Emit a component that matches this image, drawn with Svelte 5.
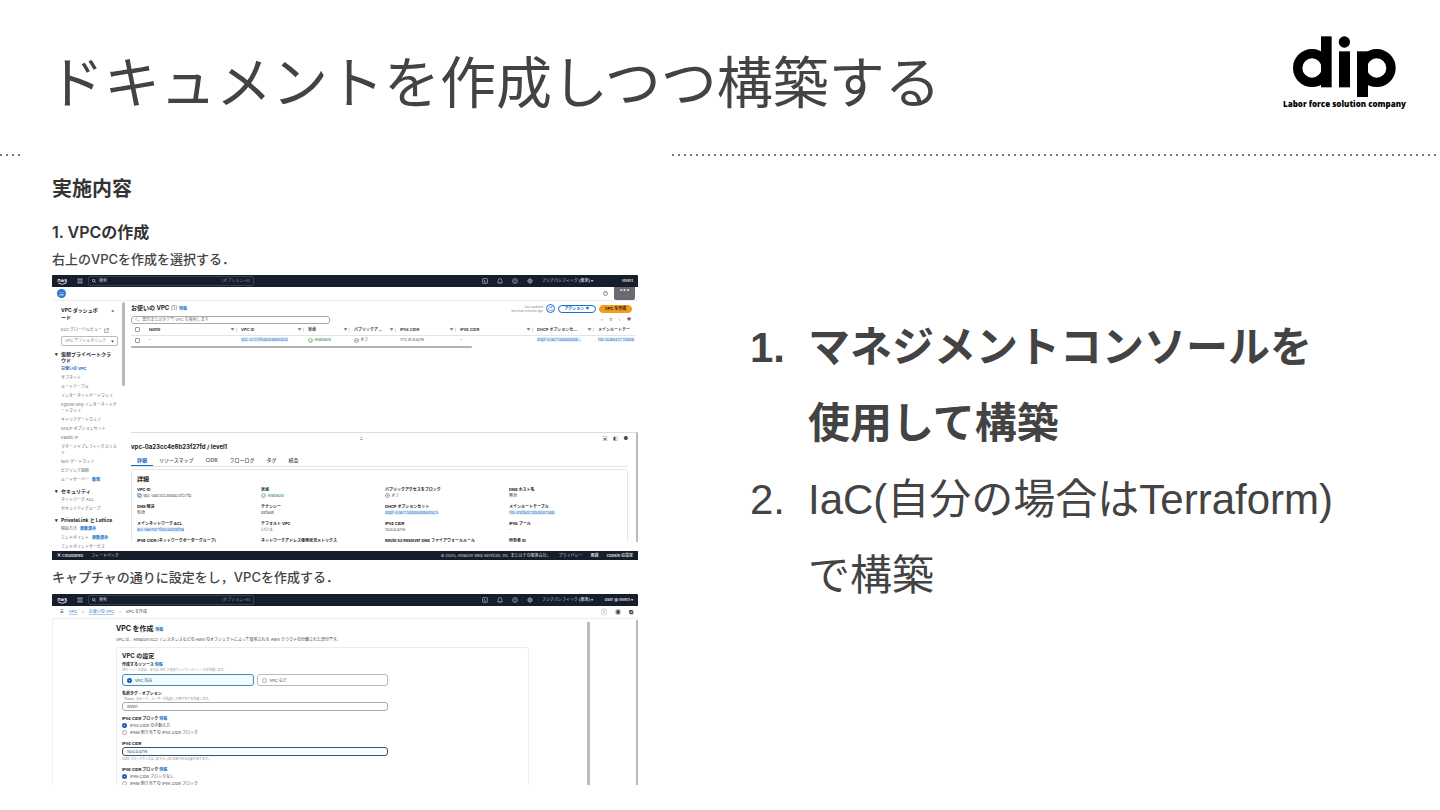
<script>
  const groups = [
    {
      title: '仮想プライベートクラウド',
      items: [
        { name: 'お使いの VPC', active: true },
        { name: 'サブネット' },
        { name: 'ルートテーブル' },
        { name: 'インターネットゲートウェイ' },
        { name: 'Egress-only インターネットゲートウェイ' },
        { name: 'キャリアゲートウェイ' },
        { name: 'DHCP オプションセット' },
        { name: 'Elastic IP' },
        { name: 'マネージドプレフィックスリスト' },
        { name: 'NAT ゲートウェイ' },
        { name: 'ピアリング接続' },
        { name: 'ルートサーバー', tag: '新規' }
      ]
    },
    { title: 'セキュリティ', items: [{ name: 'ネットワーク ACL' }, { name: 'セキュリティグループ' }] },
    {
      title: 'PrivateLink と Lattice',
      items: [
        { name: '開始方法', tag: '更新済み' },
        { name: 'エンドポイント', tag: '更新済み' },
        { name: 'エンドポイントサービス' }
      ]
    }
  ];
  const columns = ['Name', 'VPC ID', '状態', 'パブリックア...', 'IPv4 CIDR', 'IPv6 CIDR', 'DHCP オプションセ...', 'メインルートテー'];
  const tabs = ['詳細', 'リソースマップ', 'CIDR', 'フローログ', 'タグ', '統合'];
  const details = [
    { label: 'VPC ID', value: 'vpc-0a23cc4e8b23f27fd', icon: 'copy' },
    { label: '状態', value: 'Available', icon: 'ok' },
    { label: 'パブリックアクセスをブロック', value: 'オフ', icon: 'off' },
    { label: 'DNS ホスト名', value: '無効' },
    { label: 'DNS 解決', value: '有効' },
    { label: 'テナンシー', value: 'default' },
    { label: 'DHCP オプションセット', value: 'dopt-03a7138bea4db6d5c5', link: true },
    { label: 'メインルートテーブル', value: 'rtb-01dfa2c1d5d0875bb', link: true },
    { label: 'メインネットワーク ACL', value: 'acl-0a61971f86ca0d9fda', link: true },
    { label: 'デフォルト VPC', value: 'いいえ' },
    { label: 'IPv4 CIDR', value: '10.0.0.0/16' },
    { label: 'IPv6 プール', value: '-' },
    { label: 'IPv6 CIDR (ネットワークボーダーグループ)' },
    { label: 'ネットワークアドレス使用状況メトリクス' },
    { label: 'Route 53 Resolver DNS ファイアウォールルール' },
    { label: '所有者 ID' }
  ];
</script>

{#snippet topbar(user, id)}
  <header class="topbar">
    <svg class="aws" viewBox="0 0 20 14"><path d="M2 8V3h4v5M8 3l1 5 2-5 1 5 2-5M19 3h-3v2h3v3h-4M2 10q8 5 17 0" /></svg>
    <svg class="apps" viewBox="0 0 10 10"><path d="M1 1h2v2H1zM4 1h2v2H4zM7 1h2v2H7zM1 4h2v2H1zM4 4h2v2H4zM7 4h2v2H7zM1 7h2v2H1zM4 7h2v2H4zM7 7h2v2H7z" /></svg>
    <label class="find" for={id}>
      <svg viewBox="0 0 10 10"><circle cx="4" cy="4" r="3" /><path d="M6 6l3 3" /></svg>
      <input {id} type="search" placeholder="検索" aria-label="検索" />
      <span>[オプション+S]</span>
    </label>
    <div class="tools">
      <svg viewBox="0 0 10 10"><rect x="1" y="1" width="8" height="8" rx="1" /><path d="M3 3l2 2-2 2M5 7h2" /></svg>
      <svg viewBox="0 0 10 10"><path d="M1 8h8L8 6V4a3 3 0 0 0-6 0v2zM4 9h2" /></svg>
      <svg viewBox="0 0 10 10"><circle cx="5" cy="5" r="4" /><path d="M4 4q1-2 2 0L5 5v1M5 7v1" /></svg>
      <svg viewBox="0 0 10 10"><circle cx="5" cy="5" r="3" /><circle cx="5" cy="5" r="1" /><path d="M5 0v2M5 8v2M0 5h2M8 5h2M2 2l1 1M7 7l1 1M8 2L7 3M2 8l1-1" /></svg>
    </div>
    <span class="region">アジアパシフィック <b>(東京) ▾</b></span>
    <b class="user">{user}</b>
  </header>
{/snippet}

{#snippet stateIcon(kind)}
  <svg class="state {kind}" viewBox="0 0 10 10">
    {#if kind === 'copy'}
      <rect x="1" y="1" width="6" height="6" rx="1" /><rect x="3" y="3" width="6" height="6" rx="1" />
    {:else}
      <circle cx="5" cy="5" r="4" /><path d={kind === 'ok' ? 'M3 5l2 2 3-4' : 'M3 5h4'} />
    {/if}
  </svg>
{/snippet}

<div class="slide">
  <header class="head">
    <h1>ドキュメントを作成しつつ構築する</h1>
    <div class="logo">
      <svg viewBox="160 47 309 183" role="img" aria-label="dip">
        <g class="bowls"><circle cx="217" cy="143" r="43" /><circle cx="411" cy="143" r="43" /></g>
        <g class="stems">
          <rect x="244" y="48" width="32" height="153" />
          <rect x="298" y="93" width="33" height="108" />
          <circle cx="314" cy="65" r="17" />
          <rect x="352" y="93" width="33" height="137" />
        </g>
      </svg>
      <small>Labor force solution company</small>
    </div>
  </header>
  <div class="rule"><i></i><i></i></div>

  <main>
    <article class="doc">
      <h2>実施内容</h2>
      <h3>1. VPCの作成</h3>
      <p>右上のVPCを作成を選択する．</p>

      <section class="console list">
        {@render topbar('level1', 'find-list')}
        <div class="strip"><span class="menu">≡</span><span class="info">i</span><span class="more">•••</span></div>
        <div class="body">
          <nav>
            <div class="navtitle"><b>VPC ダッシュボード</b><span>×</span></div>
            <div class="global">EC2 グローバルビュー <svg viewBox="0 0 10 10"><path d="M4 2H1v7h7V6M5 1h4v4M9 1L4 6" /></svg></div>
            <div class="select">
              <select aria-label="VPC でフィルタリング"><option>VPC でフィルタリング</option></select>
              <svg viewBox="0 0 10 10"><path d="M0 2h10L5 8z" /></svg>
            </div>
            {#each groups as group}
              <b class="group">{group.title}</b>
              {#each group.items as item}
                <a href="#nav" class:active={item.active}>{item.name}{#if item.tag}<em>{item.tag}</em>{/if}</a>
              {/each}
            {/each}
          </nav>
          <div class="navscroll"></div>
          <div class="pane">
            <div class="listing">
              <div class="line">
                <h4>お使いの VPC <span>(1)</span> <a href="#info">情報</a></h4>
                <div class="actions">
                  <small>Last updated<br />less than a minute ago</small>
                  <button class="round" aria-label="更新"><svg viewBox="0 0 10 10"><path d="M8 3a4 4 0 1 0 1 3M8 0v3H5" /></svg></button>
                  <button class="pill">アクション ▼</button>
                  <button class="pill orange">VPC を作成</button>
                </div>
              </div>
              <div class="line">
                <input class="filter" type="text" aria-label="VPC を検索" placeholder="🔍︎  属性またはタグで VPC を検索します" />
                <div class="pages"><span>‹</span><b>1</b><span>›</span><b>✿</b></div>
              </div>
              <table>
                <thead>
                  <tr>
                    <th><input type="checkbox" aria-label="すべて選択" /></th>
                    {#each columns as column, i}
                      <th><div><span>{column}</span>{#if i < 7}<i>▼ |</i>{/if}</div></th>
                    {/each}
                  </tr>
                </thead>
                <tbody>
                  <tr>
                    <td><input type="checkbox" aria-label="選択" /></td>
                    <td>–</td>
                    <td><a href="#vpc">vpc-0723f6b0e4a96dcb</a></td>
                    <td class="green">{@render stateIcon('ok')} Available</td>
                    <td>{@render stateIcon('off')} オフ</td>
                    <td>172.31.0.0/16</td>
                    <td>–</td>
                    <td><a href="#dopt">dopt-03a7138bea4db...</a></td>
                    <td><a href="#rtb">rtb-0ca94377090b</a></td>
                  </tr>
                </tbody>
              </table>
              <div class="tablescroll"></div>
            </div>
            <div class="split">
              <div class="handle"><span></span><b>=</b><span>▣ ◧ ●</span></div>
              <h4>vpc-0a23cc4e8b23f27fd / level1</h4>
              <div class="tabs">
                {#each tabs as tab, i}<button class:on={i === 0}>{tab}</button>{/each}
              </div>
              <div class="card">
                <h4>詳細</h4>
                <dl>
                  {#each details as d}
                    <div>
                      <dt>{d.label}</dt>
                      {#if d.value}
                        <dd class:green={d.icon === 'ok'}>
                          {#if d.icon}{@render stateIcon(d.icon)}{/if}
                          {#if d.link}<a href="#detail">{d.value}</a>{:else}{d.value}{/if}
                        </dd>
                      {/if}
                    </div>
                  {/each}
                </dl>
              </div>
            </div>
          </div>
        </div>
        <footer>
          <b>▣ CloudShell</b><span>フィードバック</span>
          <span class="legal">© 2025, Amazon Web Services, Inc. またはその関連会社。</span>
          <span>プライバシー</span><b>用語</b><b>Cookie の設定</b>
        </footer>
      </section>

      <p>キャプチャの通りに設定をし，VPCを作成する．</p>

      <section class="console create">
        {@render topbar('user @ level1 ▾', 'find-create')}
        <div class="crumbs">
          <b>☰</b><a href="#vpc">VPC</a><span>›</span><a href="#vpcs">お使いの VPC</a><span>›</span><span>VPC を作成</span>
          <div>ⓘ<b>◉</b><b>⧉</b></div>
        </div>
        <div class="form-wrap">
          <form>
            <h4>VPC を作成 <a href="#info">情報</a></h4>
            <p class="lead">VPC は、Amazon EC2 インスタンスなどの AWS のオブジェクトによって使用される AWS クラウドの分離された部分です。</p>
            <div class="settings">
              <h4>VPC の設定</h4>
              <fieldset>
                <legend>作成するリソース <a href="#info">情報</a></legend>
                <small>VPC リソースのみ、または VPC と他のネットワークリソースを作成します。</small>
                <div class="choices">
                  <label class="chosen"><input type="radio" name="res" checked />VPC のみ</label>
                  <label><input type="radio" name="res" />VPC など</label>
                </div>
              </fieldset>
              <div class="field">
                <label for="tag">名前タグ - オプション</label>
                <small>「Name」のキーと、ユーザーが指定した値でタグを作成します。</small>
                <input id="tag" type="text" value="level1" />
              </div>
              <fieldset>
                <legend>IPv4 CIDR ブロック <a href="#info">情報</a></legend>
                <label><input type="radio" name="v4" checked />IPv4 CIDR の手動入力</label>
                <label><input type="radio" name="v4" />IPAM 割り当ての IPv4 CIDR ブロック</label>
              </fieldset>
              <div class="field">
                <label for="cidr">IPv4 CIDR</label>
                <input id="cidr" class="focus" type="text" value="10.0.0.0/16" />
                <small>CIDR ブロックサイズは /16 から /28 の間である必要があります。</small>
              </div>
              <fieldset>
                <legend>IPv6 CIDR ブロック <a href="#info">情報</a></legend>
                <label><input type="radio" name="v6" checked />IPv6 CIDR ブロックなし</label>
                <label><input type="radio" name="v6" />IPAM 割り当ての IPv6 CIDR ブロック</label>
              </fieldset>
            </div>
          </form>
          <div class="bar inner"></div>
          <div class="bar"></div>
        </div>
      </section>
    </article>

    <ol>
      <li class="now"><span>1.</span><div>マネジメントコンソールを使用して構築</div></li>
      <li><span>2.</span><div>IaC(自分の場合はTerraform)で構築</div></li>
    </ol>
  </main>
</div>

<style>
  :global(body) { margin: 0; background: #fff; }
  * { box-sizing: border-box; }
  h1, h2, h3, h4, p, ol, dl, dd, fieldset { margin: 0; padding: 0; border: 0; min-width: 0; }
  a { color: #1a6fc9; text-decoration: none; }
  i, em { font-style: normal; }
  input, button, select { font: inherit; color: inherit; margin: 0; padding: 0; border: 0; background: none; min-width: 0; }
  svg { fill: none; stroke: currentColor; flex: none; }

  .slide {
    height: 100vh; display: flex; flex-direction: column; padding-bottom: 25px;
    color: #434343; font-family: "Liberation Sans", "Noto Sans CJK JP", sans-serif; overflow: hidden;
  }
  .head { display: flex; justify-content: space-between; align-items: flex-start; padding: 32px 32px 0 48px; height: 154px; flex: none; }
  h1 { font-size: 56px; line-height: 104px; font-weight: 400; white-space: nowrap; }
  .logo { display: flex; flex-direction: column; align-items: center; min-width: 127px; padding-top: 4px; color: #000; }
  .logo svg { width: 103px; height: 61px; }
  .bowls { stroke-width: 28; }
  .stems { fill: currentColor; stroke: none; }
  .logo small { font: 800 8px/14px "Open Sans", sans-serif; white-space: nowrap; }
  .rule { display: grid; grid-template-columns: 22px 1fr; column-gap: 650px; height: 3px; flex: none; }
  .rule i { background: radial-gradient(circle at 1px 1px, #555 0, #888 1px, transparent 1px) 0 0 / 6px 3px repeat-x; }

  main { flex: 1; min-height: 0; display: grid; grid-template-columns: minmax(0, 7fr) minmax(0, 8fr); grid-template-rows: minmax(0, 1fr); }
  ol { list-style: none; padding: 153px 96px 0 78px; font-size: 42px; line-height: 76px; }
  li { display: grid; grid-template-columns: 58px 1fr; }
  .now { font-weight: 700; }

  .doc {
    display: flex; flex-direction: column; overflow: hidden; padding: 17px 34px 0 52px; color: #333;
    font-family: Inter, "Noto Sans CJK JP", sans-serif;
  }
  .doc > * { flex: none; }
  h2 { font-size: 20px; line-height: 30px; }
  h3 { font-size: 16px; line-height: 24px; margin-top: 16px; font-weight: 600; }
  .doc > p { font-size: 13px; line-height: 18px; margin: 6px 0 7px; font-weight: 500; color: #444; }
  .doc > .console ~ p { margin: 8px 0; }

  .console { display: flex; flex-direction: column; font-size: 4px; line-height: 6px; background: #fff; color: #444; }
  .list { height: 285px; }
  .create { height: 240px; }
  h4 { font-size: 6px; line-height: 8px; color: #222; }
  h4 a { font-size: 4px; }
  h4 span { font-weight: 400; color: #777; }

  .topbar { display: flex; align-items: center; height: 12px; flex: none; padding: 0 5px; background: #161e2b; color: #c8ccd2; border-radius: 1px 1px 0 0; }
  .aws { width: 10px; height: 7px; stroke-width: 2; }
  .apps { width: 6px; height: 6px; margin: 0 5px 0 10px; fill: currentColor; stroke: none; }
  .find { display: flex; align-items: center; width: 166px; height: 10px; border: 1px solid #3a424e; border-radius: 2px; padding: 0 3px; gap: 3px; }
  .find svg { width: 4px; height: 4px; stroke-width: 2; }
  .find input { flex: 1; height: 6px; }
  .find input::placeholder { color: #c8ccd2; }
  .find span { color: #8a929c; }
  .tools { display: flex; gap: 9px; margin-left: auto; }
  .tools svg { width: 6px; height: 6px; stroke-width: 1; }
  .region { margin-left: 9px; white-space: nowrap; }
  .user { width: 40px; text-align: right; white-space: nowrap; }

  .strip { display: flex; align-items: center; height: 14px; flex: none; padding: 0 3px 0 5px; border-bottom: 1px solid #eee; }
  .menu { width: 9px; height: 9px; border-radius: 50%; background: #2f78d0; color: #fff; text-align: center; line-height: 9px; font-size: 6px; }
  .info { margin-left: auto; width: 5px; height: 5px; border: 1px solid #888; border-radius: 50%; line-height: 3px; text-align: center; font-size: 3px; }
  .more { margin-left: 6px; width: 21px; height: 13px; background: #686b70; color: #fff; text-align: center; border-radius: 0 0 2px 2px; font-size: 6px; line-height: 5px; }

  .body { flex: 1; min-height: 0; display: grid; grid-template-columns: 70px 3px minmax(0, 1fr); grid-template-rows: minmax(0, 1fr); }
  nav { display: flex; flex-direction: column; justify-content: space-between; padding: 6px 4px 1px 9px; overflow: hidden; color: #666; }
  .navtitle { display: flex; gap: 10px; font-size: 5px; line-height: 7px; color: #222; }
  .navtitle b { width: 40px; word-break: break-all; }
  .global { display: flex; align-items: center; gap: 2px; margin-top: 3px; white-space: nowrap; }
  .global svg { width: 5px; height: 5px; }
  .select { display: flex; align-items: center; width: 57px; height: 10px; flex: none; border: 1px solid #bbb; border-radius: 2px; padding: 0 3px; color: #888; }
  .select select { appearance: none; flex: 1; }
  .select svg { width: 3px; height: 3px; fill: #444; stroke: none; }
  .group { position: relative; font-size: 5px; color: #222; margin-top: 2px; padding-right: 3px; word-break: break-all; }
  .group::before { content: '▾'; position: absolute; left: -6px; }
  nav a { color: #666; word-break: break-all; }
  nav a.active { color: #1a6fc9; font-weight: 700; }
  nav em { color: #1a6fc9; font-weight: 700; margin-left: 3px; background: #e2f0fc; }
  .navscroll { background: #b8b8b8; height: 84px; margin-top: 1px; border-radius: 2px; }

  .pane { display: grid; grid-template-rows: 131px minmax(0, 1fr); padding: 0 0 9px 6px; min-width: 0; }
  .listing { padding: 2px 3px 0 0; }
  .line { display: flex; justify-content: space-between; align-items: center; height: 11px; }
  .actions { display: flex; align-items: center; gap: 3px; padding-right: 3px; }
  .actions small { font-size: 3px; line-height: 4px; text-align: right; color: #888; }
  .round { width: 9px; height: 9px; border: 1px solid #1a6fc9; border-radius: 50%; color: #1a6fc9; display: grid; place-items: center; }
  .round svg { width: 5px; height: 5px; }
  .pill { width: 38px; height: 8px; border: 1px solid #1a6fc9; border-radius: 4px; color: #1a6fc9; font-weight: 700; line-height: 6px; white-space: nowrap; }
  .pill.orange { width: 33px; background: #f49a1c; border-color: #f49a1c; color: #222; }
  .filter { width: 199px; height: 8px; border: 1px solid #aaa; border-radius: 3px; padding-left: 3px; }
  .pages { display: flex; gap: 7px; padding-right: 4px; }
  table { width: 100%; table-layout: fixed; border-collapse: collapse; }
  th, td { padding: 0; height: 10px; text-align: left; white-space: nowrap; overflow: hidden; vertical-align: middle; }
  th { border-bottom: 1px solid #e4e4e4; }
  th:nth-child(1) { width: 18px; }
  th:nth-child(2) { width: 92px; }
  th:nth-child(3) { width: 67px; }
  th:nth-child(4), th:nth-child(5) { width: 46px; }
  th:nth-child(6) { width: 60px; }
  th:nth-child(7) { width: 77px; }
  th:nth-child(8) { width: 61px; }
  th div { display: flex; justify-content: space-between; padding-right: 4px; }
  th i { color: #888; font-weight: 400; }
  td a, dd a { background: #e6f2fc; }
  th input, td input { appearance: none; display: block; width: 5px; height: 5px; border: 1px solid #999; border-radius: 1px; margin-left: 4px; }
  .state { width: 5px; height: 5px; vertical-align: middle; }
  .green { color: #2b8a3e; }
  .state.copy { color: #1a6fc9; }
  .tablescroll { width: 341px; height: 2px; background: #b4b4b4; margin-top: 1px; border-radius: 1px; }

  .split { border-top: 1px solid #ddd; overflow: hidden; border-right: 2px solid #bbb; padding-right: 8px; }
  .handle { display: grid; grid-template-columns: 1fr 40px 1fr; height: 10px; align-items: center; font-size: 5px; }
  .handle b { color: #888; }
  .handle span:last-child { text-align: right; word-spacing: 4px; }
  .tabs { display: flex; margin-top: 4px; border-bottom: 1px solid #e4e4e4; font-size: 5px; }
  .tabs button { height: 11px; padding: 0 6px; font-weight: 500; border-bottom: 1px solid transparent; }
  .tabs .on { color: #1a6fc9; border-color: #1a6fc9; font-weight: 700; }
  .card { border: 1px solid #e8e8e8; border-radius: 3px; margin-top: 2px; padding: 5px 0 0 5px; }
  dl { display: grid; grid-template-columns: 1fr 1fr 1fr 118px; row-gap: 5px; margin-top: 4px; }
  dl div { min-height: 12px; min-width: 0; }
  dt { font-weight: 700; color: #222; white-space: nowrap; overflow: hidden; }
  dd { white-space: nowrap; }
  footer { display: flex; align-items: center; gap: 8px; height: 9px; flex: none; background: #161e2b; color: #d4d8dc; padding: 0 5px; white-space: nowrap; }
  footer .legal { margin-left: auto; }

  .crumbs { display: flex; align-items: center; gap: 5px; height: 13px; flex: none; padding: 0 5px 0 8px; border-bottom: 1px solid #eee; }
  .crumbs a { border-bottom: 1px solid #a9cdf0; line-height: 5px; }
  .crumbs div { margin-left: auto; display: flex; gap: 8px; font-size: 6px; }
  .form-wrap { flex: 1; min-height: 0; display: flex; border-left: 1px solid #f0f0f0; }
  form { flex: 1; padding: 5px 58px 0 63px; min-width: 0; }
  form > h4 { font-size: 7px; line-height: 10px; }
  .lead { margin-top: 1px; line-height: 8px; white-space: nowrap; }
  .settings { border: 1px solid #ececec; border-radius: 3px; padding: 3px 140px 0 5px; margin-top: 3px; }
  .settings > h4 { line-height: 10px; }
  legend, .field > label { display: block; padding: 0; font-weight: 700; color: #222; }
  .settings > * + * { margin-top: 5px; }
  .settings > h4 + fieldset { margin-top: 1px; }
  .settings small { display: block; font-size: 3px; line-height: 5px; color: #888; white-space: nowrap; }
  .choices { display: grid; grid-template-columns: 1fr 1fr; gap: 3px; margin-top: 1px; }
  fieldset label { display: flex; align-items: center; gap: 3px; line-height: 7px; }
  .choices label { height: 12px; border: 1px solid #bbb; border-radius: 3px; padding-left: 4px; }
  .choices .chosen { border-color: #4d8dab; background: #f0fbff; }
  input[type='radio'] { appearance: none; width: 5px; height: 5px; border: 1px solid #aaa; border-radius: 50%; }
  input[type='radio']:checked { border: 2px solid #1f5fb4; background: #fff; }
  .field input { display: block; width: 100%; height: 9px; border: 1px solid #aaa; border-radius: 3px; padding-left: 4px; }
  .field .focus { border-color: #3b5568; background: #f6fcff; margin-bottom: 1px; }
  .bar { width: 2px; background: #bbb; margin-top: 1px; }
  .bar.inner { width: 3px; margin: 3px 46px 0 0; }
</style>
